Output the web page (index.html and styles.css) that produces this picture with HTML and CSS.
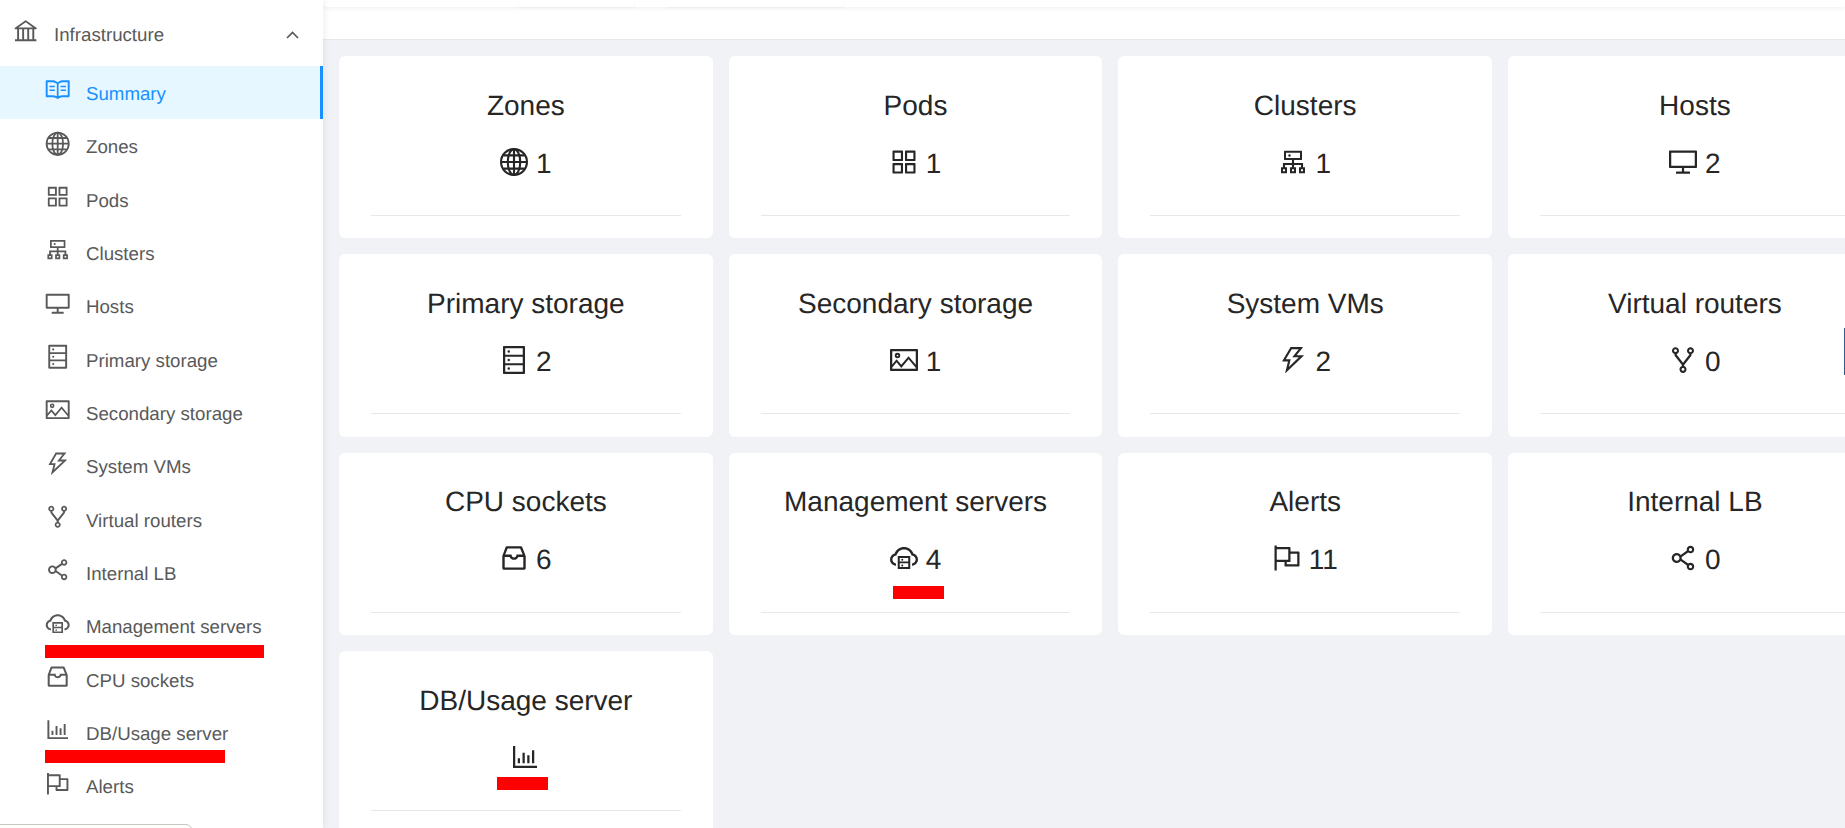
FILE: index.html
```html
<!DOCTYPE html>
<html lang="en">
<head>
<meta charset="utf-8">
<title>Infrastructure Summary</title>
<link rel="stylesheet" href="styles.css">
</head>
<body>
<svg class="sprite" xmlns="http://www.w3.org/2000/svg">
  <symbol id="i-bank" viewBox="0 0 1024 1024"><path d="M894 462c30.9 0 43.8-39.7 18.7-58L530.8 126.2a32.81 32.81 0 00-37.5 0L111.3 404c-25.1 18.2-12.2 58 18.8 58H192v374h-72c-4.4 0-8 3.6-8 8v56c0 4.4 3.6 8 8 8h784c4.4 0 8-3.6 8-8v-56c0-4.4-3.6-8-8-8h-72V462h62zM512 196.7l271.1 197.2H240.9L512 196.7zM264 462h117v374H264V462zm189 0h117v374H453V462zm307 374H642V462h118v374z"/></symbol>
  <symbol id="i-up" viewBox="0 0 13 8"><path d="M1 7L6.5 1.5 12 7" fill="none" stroke="currentColor" stroke-width="1.7"/></symbol>
  <symbol id="i-read" viewBox="0 0 1024 1024"><path d="M928 161H699.2c-49.1 0-97.1 14.1-138.4 40.7L512 233l-48.8-31.3A255.2 255.2 0 00324.8 161H96c-17.7 0-32 14.3-32 32v568c0 17.7 14.3 32 32 32h228.8c49.1 0 97.1 14.1 138.4 40.7l44.4 28.6c1.3.8 2.8 1.3 4.3 1.3s3-.4 4.3-1.3l44.4-28.6C602 807.1 650.1 793 699.2 793H928c17.7 0 32-14.3 32-32V193c0-17.7-14.3-32-32-32zM324.8 721H136V233h188.8c35.4 0 69.8 10.1 99.5 29.2l48.8 31.3 6.9 4.5v462c-47.6-25.6-100.8-39-155.2-39zm563.2 0H699.2c-54.4 0-107.6 13.4-155.2 39V298l6.9-4.5 48.8-31.3c29.7-19.1 64.1-29.2 99.5-29.2H888v488zM396.9 361H211.1c-3.9 0-7.1 3.4-7.1 7.5v45c0 4.1 3.2 7.5 7.1 7.5h185.7c3.9 0 7.1-3.4 7.1-7.5v-45c.1-4.1-3.1-7.5-7-7.5zm223.1 7.5v45c0 4.1 3.2 7.5 7.1 7.5h185.7c3.9 0 7.1-3.4 7.1-7.5v-45c0-4.1-3.2-7.5-7.1-7.5H627.1c-3.9 0-7.1 3.4-7.1 7.5zM396.9 501H211.1c-3.9 0-7.1 3.4-7.1 7.5v45c0 4.1 3.2 7.5 7.1 7.5h185.7c3.9 0 7.1-3.4 7.1-7.5v-45c.1-4.1-3.1-7.5-7-7.5zm416 0H627.1c-3.9 0-7.1 3.4-7.1 7.5v45c0 4.1 3.2 7.5 7.1 7.5h185.7c3.9 0 7.1-3.4 7.1-7.5v-45c.1-4.1-3.1-7.5-7-7.5z"/></symbol>
  <symbol id="i-global" viewBox="0 0 1024 1024"><g fill="none" stroke="currentColor" stroke-width="68"><circle cx="512" cy="512" r="414"/><ellipse cx="512" cy="512" rx="200" ry="414"/><path d="M512 98v828M98 512h828M170 300h684M170 724h684"/></g></symbol>
  <symbol id="i-appstore" viewBox="0 0 1024 1024"><path d="M864 144H560c-8.8 0-16 7.2-16 16v304c0 8.8 7.2 16 16 16h304c8.8 0 16-7.2 16-16V160c0-8.8-7.2-16-16-16zm-52 268H612V212h200v200zM464 544H160c-8.8 0-16 7.2-16 16v304c0 8.8 7.2 16 16 16h304c8.8 0 16-7.2 16-16V560c0-8.8-7.2-16-16-16zm-52 268H212V612h200v200zm452-268H560c-8.8 0-16 7.2-16 16v304c0 8.8 7.2 16 16 16h304c8.8 0 16-7.2 16-16V560c0-8.8-7.2-16-16-16zm-52 268H612V612h200v200zM464 144H160c-8.8 0-16 7.2-16 16v304c0 8.8 7.2 16 16 16h304c8.8 0 16-7.2 16-16V160c0-8.8-7.2-16-16-16zm-52 268H212V212h200v200z"/></symbol>
  <symbol id="i-cluster" viewBox="0 0 1024 1024"><path d="M888 680h-54V540H546v-92h238c8.8 0 16-7.2 16-16V168c0-8.8-7.2-16-16-16H240c-8.8 0-16 7.2-16 16v264c0 8.8 7.2 16 16 16h238v92H190v140h-54c-4.4 0-8 3.6-8 8v176c0 4.4 3.6 8 8 8h176c4.4 0 8-3.6 8-8V688c0-4.4-3.6-8-8-8h-54v-72h220v72h-54c-4.4 0-8 3.6-8 8v176c0 4.4 3.6 8 8 8h176c4.4 0 8-3.6 8-8V688c0-4.4-3.6-8-8-8h-54v-72h220v72h-54c-4.4 0-8 3.6-8 8v176c0 4.4 3.6 8 8 8h176c4.4 0 8-3.6 8-8V688c0-4.4-3.6-8-8-8zM256 805.3c0 1.5-1.2 2.7-2.7 2.7h-58.7c-1.5 0-2.7-1.2-2.7-2.7v-58.7c0-1.5 1.2-2.7 2.7-2.7h58.7c1.5 0 2.7 1.2 2.7 2.7v58.7zm288 0c0 1.5-1.2 2.7-2.7 2.7h-58.7c-1.5 0-2.7-1.2-2.7-2.7v-58.7c0-1.5 1.2-2.7 2.7-2.7h58.7c1.5 0 2.7 1.2 2.7 2.7v58.7zM288 384V216h448v168H288zm544 421.3c0 1.5-1.2 2.7-2.7 2.7h-58.7c-1.5 0-2.7-1.2-2.7-2.7v-58.7c0-1.5 1.2-2.7 2.7-2.7h58.7c1.5 0 2.7 1.2 2.7 2.7v58.7zM360 300a40 40 0 1080 0 40 40 0 10-80 0z"/></symbol>
  <symbol id="i-desktop" viewBox="0 0 1024 1024"><path d="M928 140H96c-17.7 0-32 14.3-32 32v496c0 17.7 14.3 32 32 32h380v112H304c-8.8 0-16 7.2-16 16v48c0 4.4 3.6 8 8 8h432c4.4 0 8-3.6 8-8v-48c0-8.8-7.2-16-16-16H548V700h380c17.7 0 32-14.3 32-32V172c0-17.7-14.3-32-32-32zm-40 488H136V212h752v416z"/></symbol>
  <symbol id="i-database" viewBox="0 0 1024 1024"><path d="M832 64H192c-17.7 0-32 14.3-32 32v832c0 17.7 14.3 32 32 32h640c17.7 0 32-14.3 32-32V96c0-17.7-14.3-32-32-32zm-600 72h560v208H232V136zm560 480H232V408h560v208zm0 272H232V680h560v208zM304 240a40 40 0 1080 0 40 40 0 10-80 0zm0 272a40 40 0 1080 0 40 40 0 10-80 0zm0 272a40 40 0 1080 0 40 40 0 10-80 0z"/></symbol>
  <symbol id="i-picture" viewBox="0 0 1024 1024"><path d="M928 160H96c-17.7 0-32 14.3-32 32v640c0 17.7 14.3 32 32 32h832c17.7 0 32-14.3 32-32V192c0-17.7-14.3-32-32-32zm-40 632H136v-39.9l138.5-164.3 150.1 178L658.1 489 888 761.6V792zm0-129.8L664.2 396.8c-3.2-3.8-9-3.8-12.2 0L424.6 666.4l-144-170.7c-3.2-3.8-9-3.8-12.2 0L136 652.7V232h752v430.2zM304 456a88 88 0 100-176 88 88 0 000 176zm0-116c15.5 0 28 12.5 28 28s-12.5 28-28 28-28-12.5-28-28 12.5-28 28-28z"/></symbol>
  <symbol id="i-thunder" viewBox="0 0 1024 1024"><path d="M848 359.3H627.7L825.8 109c4.1-5.3.4-13-6.3-13H436c-2.8 0-5.5 1.5-6.9 4L170 547.5c-3.1 5.3.7 12 6.9 12h174.4l-89.4 357.6c-1.9 7.8 7.5 13.3 13.3 7.7L853.5 373c5.2-4.9 1.7-13.7-5.5-13.7zM378.2 732.5l60.3-241H281.1l189.6-327.4h224.6L487 427.4h211L378.2 732.5z"/></symbol>
  <symbol id="i-fork" viewBox="0 0 1024 1024"><path d="M752 100c-61.8 0-112 50.2-112 112 0 47.7 29.9 88.5 72 104.6v27.6L512 601.4 312 344.2v-27.6c42.1-16.1 72-56.9 72-104.6 0-61.8-50.2-112-112-112s-112 50.2-112 112c0 50.6 33.8 93.5 80 107.3v34.4c0 9.7 3.3 19.3 9.3 27L476 672.3v33.6c-44.2 15-76 56.9-76 106.1 0 61.8 50.2 112 112 112s112-50.2 112-112c0-49.2-31.8-91-76-106.1v-33.6l226.7-291.6c6-7.7 9.3-17.3 9.3-27v-34.4c46.2-13.8 80-56.7 80-107.3 0-61.8-50.2-112-112-112zM224 212a48.01 48.01 0 0196 0 48.01 48.01 0 01-96 0zm336 600a48.01 48.01 0 01-96 0 48.01 48.01 0 0196 0zm192-552a48.01 48.01 0 010-96 48.01 48.01 0 010 96z"/></symbol>
  <symbol id="i-share" viewBox="0 0 1024 1024"><path d="M752 664c-28.5 0-54.8 10-75.4 26.7L469.4 540.8a160.68 160.68 0 000-57.6l207.2-149.9C697.2 350 723.5 360 752 360c66.2 0 120-53.8 120-120s-53.8-120-120-120-120 53.8-120 120c0 11.6 1.6 22.7 4.7 33.3L439.9 415.8C410.7 377.1 364.3 352 312 352c-88.4 0-160 71.6-160 160s71.6 160 160 160c52.3 0 98.7-25.1 127.9-63.8l196.8 142.5c-3.1 10.6-4.7 21.8-4.7 33.3 0 66.2 53.8 120 120 120s120-53.8 120-120-53.8-120-120-120zm0-476c28.7 0 52 23.3 52 52s-23.3 52-52 52-52-23.3-52-52 23.3-52 52-52zM312 600c-48.5 0-88-39.5-88-88s39.5-88 88-88 88 39.5 88 88-39.5 88-88 88zm440 236c-28.7 0-52-23.3-52-52s23.3-52 52-52 52 23.3 52 52-23.3 52-52 52z"/></symbol>
  <symbol id="i-cloud" viewBox="0 0 1024 1024"><path d="M704 446H320c-4.4 0-8 3.6-8 8v402c0 4.4 3.6 8 8 8h384c4.4 0 8-3.6 8-8V454c0-4.4-3.6-8-8-8zm-328 64h272v117H376V510zm272 290H376V683h272v117z"/><path d="M424 748a32 32 0 1064 0 32 32 0 10-64 0zm0-178a32 32 0 1064 0 32 32 0 10-64 0z"/><path d="M811.4 368.9C765.6 248 648.9 162 512.2 162S258.8 247.9 213 368.8C126.9 391.5 63.5 470.2 64 563.6 64.6 668 145.6 752.9 247.6 762c4.7.4 8.7-3.3 8.7-8v-60.4c0-4-3-7.4-7-7.9-27-3.4-52.5-15.2-72.1-34.5-24-23.5-37.2-55.1-37.2-88.6 0-28 9.1-54.4 26.2-76.4 16.7-21.4 40.2-36.9 66.1-43.7l37.9-10 13.9-36.7c8.6-22.8 20.6-44.2 35.7-63.5 14.9-19.2 32.6-36 52.4-50 41.1-28.9 89.5-44.2 140-44.2s98.9 15.3 140 44.3c19.9 14 37.5 30.8 52.4 50 15.1 19.3 27.1 40.7 35.7 63.5l13.8 36.6 37.8 10c54.2 14.4 92.1 63.7 92.1 120 0 33.6-13.2 65.1-37.2 88.6-19.5 19.2-44.9 31.1-71.9 34.5-4 .5-6.9 3.9-6.9 7.9V754c0 4.7 4.1 8.4 8.8 8 101.7-9.2 182.5-94 183.2-198.2.6-93.4-62.7-172.1-148.6-194.9z"/></symbol>
  <symbol id="i-inbox" viewBox="0 0 1024 1024"><path d="M885.2 446.3l-.2-.8-112.2-285.1c-5-16.1-19.9-27.2-36.8-27.2H281.2c-17 0-32.1 11.3-36.9 27.6L139.4 443l-.3.7-.2.8c-1.3 4.9-1.7 9.9-1 14.8-.1 1.6-.2 3.2-.2 4.8V830a60.9 60.9 0 0060.8 60.8h627.2c33.5 0 60.8-27.3 60.9-60.8V464.1c0-1.3 0-2.6-.1-3.7.4-4.9 0-9.6-1.3-14.1zm-295.8-43l-.3 15.7c-.8 44.9-31.8 75.1-77.1 75.1-22.1 0-41.1-7.1-54.8-20.6S436 441.2 435.6 419l-.3-15.7H229.5L309 210h399.2l81.7 193.3H589.4zm-375 76.8h157.3c24.3 57.1 76 90.8 140.4 90.8 33.7 0 65-9.4 90.3-27.2 22.2-15.6 39.5-37.4 50.7-63.6h156.5V814H214.4V480.1z"/></symbol>
  <symbol id="i-chart" viewBox="0 0 1024 1024"><path d="M888 792H200V168c0-4.4-3.6-8-8-8h-56c-4.4 0-8 3.6-8 8v688c0 4.4 3.6 8 8 8h752c4.4 0 8-3.6 8-8v-56c0-4.4-3.6-8-8-8zm-600-80h56c4.4 0 8-3.6 8-8V560c0-4.4-3.6-8-8-8h-56c-4.4 0-8 3.6-8 8v144c0 4.4 3.6 8 8 8zm152 0h56c4.4 0 8-3.6 8-8V384c0-4.4-3.6-8-8-8h-56c-4.4 0-8 3.6-8 8v320c0 4.4 3.6 8 8 8zm152 0h56c4.4 0 8-3.6 8-8V462c0-4.4-3.6-8-8-8h-56c-4.4 0-8 3.6-8 8v242c0 4.4 3.6 8 8 8zm152 0h56c4.4 0 8-3.6 8-8V304c0-4.4-3.6-8-8-8h-56c-4.4 0-8 3.6-8 8v400c0 4.4 3.6 8 8 8z"/></symbol>
  <symbol id="i-flag" viewBox="0 0 1024 1024"><path d="M880 305H624V192c0-17.7-14.3-32-32-32H184v-40c0-4.4-3.6-8-8-8h-56c-4.4 0-8 3.6-8 8v784c0 4.4 3.6 8 8 8h56c4.4 0 8-3.6 8-8V640h248v113c0 17.7 14.3 32 32 32h416c17.7 0 32-14.3 32-32V337c0-17.7-14.3-32-32-32zM184 568V232h368v336H184zm656 145H504v-73h112c4.4 0 8-3.6 8-8V377h216v336z"/></symbol>
</svg>

<div class="app">
  <aside class="sidebar">
    <div class="group-head">
      <svg class="icon"><use href="#i-bank"/></svg>
      <span class="group-label">Infrastructure</span>
      <svg class="chevron"><use href="#i-up"/></svg>
    </div>
    <nav class="menu">
      <a class="item active"><svg class="icon"><use href="#i-read"/></svg><span>Summary</span></a>
      <a class="item"><svg class="icon"><use href="#i-global"/></svg><span>Zones</span></a>
      <a class="item"><svg class="icon"><use href="#i-appstore"/></svg><span>Pods</span></a>
      <a class="item"><svg class="icon"><use href="#i-cluster"/></svg><span>Clusters</span></a>
      <a class="item"><svg class="icon"><use href="#i-desktop"/></svg><span>Hosts</span></a>
      <a class="item"><svg class="icon"><use href="#i-database"/></svg><span>Primary storage</span></a>
      <a class="item"><svg class="icon"><use href="#i-picture"/></svg><span>Secondary storage</span></a>
      <a class="item"><svg class="icon"><use href="#i-thunder"/></svg><span>System VMs</span></a>
      <a class="item"><svg class="icon"><use href="#i-fork"/></svg><span>Virtual routers</span></a>
      <a class="item"><svg class="icon"><use href="#i-share"/></svg><span>Internal LB</span></a>
      <a class="item"><svg class="icon"><use href="#i-cloud"/></svg><span>Management servers</span><i class="redact redact-mgmt"></i></a>
      <a class="item"><svg class="icon"><use href="#i-inbox"/></svg><span>CPU sockets</span></a>
      <a class="item"><svg class="icon"><use href="#i-chart"/></svg><span>DB/Usage server</span><i class="redact redact-db"></i></a>
      <a class="item"><svg class="icon"><use href="#i-flag"/></svg><span>Alerts</span></a>
    </nav>
    <div class="peek"></div>
  </aside>

  <main class="main">
    <div class="topstrip"><b class="tab tab-a"></b><b class="tab tab-b"></b></div>
    <div class="subbar"></div>
    <section class="grid">
      <article class="card"><h3>Zones</h3><div class="count"><svg class="icon"><use href="#i-global"/></svg><span>1</span></div><hr></article>
      <article class="card"><h3>Pods</h3><div class="count"><svg class="icon"><use href="#i-appstore"/></svg><span>1</span></div><hr></article>
      <article class="card"><h3>Clusters</h3><div class="count"><svg class="icon"><use href="#i-cluster"/></svg><span>1</span></div><hr></article>
      <article class="card"><h3>Hosts</h3><div class="count"><svg class="icon"><use href="#i-desktop"/></svg><span>2</span></div><hr></article>
      <article class="card"><h3>Primary storage</h3><div class="count"><svg class="icon"><use href="#i-database"/></svg><span>2</span></div><hr></article>
      <article class="card"><h3>Secondary storage</h3><div class="count"><svg class="icon"><use href="#i-picture"/></svg><span>1</span></div><hr></article>
      <article class="card"><h3>System VMs</h3><div class="count"><svg class="icon"><use href="#i-thunder"/></svg><span>2</span></div><hr></article>
      <article class="card"><h3>Virtual routers</h3><div class="count"><svg class="icon"><use href="#i-fork"/></svg><span>0</span></div><hr></article>
      <article class="card"><h3>CPU sockets</h3><div class="count"><svg class="icon"><use href="#i-inbox"/></svg><span>6</span></div><hr></article>
      <article class="card"><h3>Management servers</h3><div class="count"><svg class="icon"><use href="#i-cloud"/></svg><span>4</span><i class="redact redact-card-mgmt"></i></div><hr></article>
      <article class="card"><h3>Alerts</h3><div class="count"><svg class="icon"><use href="#i-flag"/></svg><span>11</span></div><hr></article>
      <article class="card"><h3>Internal LB</h3><div class="count"><svg class="icon"><use href="#i-share"/></svg><span>0</span></div><hr></article>
      <article class="card"><h3>DB/Usage server</h3><div class="count"><svg class="icon"><use href="#i-chart"/></svg><i class="redact redact-card-db"></i></div><hr></article>
    </section>
    <div class="scroll-mark"></div>
  </main>
</div>
</body>
</html>
```

FILE: styles.css
```css
* { box-sizing: border-box; }

html, body {
  margin: 0;
  height: 100%;
  overflow: hidden;
  background: #f0f2f5;
  font-family: "Liberation Sans", Arial, sans-serif;
  text-rendering: geometricPrecision;
}

.sprite { display: none; }

.icon { fill: currentColor; flex: none; }

.app {
  display: flex;
  height: 828px;
  overflow: hidden;
}

/* Sidebar */
.sidebar {
  position: relative;
  flex: 0 0 323px;
  background: #fff;
  color: #595959;
  font-size: 18.7px;
  box-shadow: 2px 0 6px rgba(0, 21, 41, 0.06);
  overflow: hidden;
  z-index: 2;
}

.sidebar .icon {
  width: 27.4px;
  height: 27.4px;
  margin-top: -5px;
}

.sidebar span { padding-top: 3px; }

.group-head {
  display: flex;
  align-items: center;
  height: 66px;
  padding: 0 24px 0 12.3px;
  gap: 14.3px;
}

.group-label { flex: 1; }

.chevron {
  width: 13px;
  height: 8px;
  color: #595959;
  margin-top: 3px;
}

.menu {
  display: grid;
  grid-auto-rows: 53.33px;
}

.item {
  position: relative;
  display: flex;
  align-items: center;
  gap: 14.3px;
  padding-left: 44.3px;
}

.item.active {
  background: #e6f7ff;
  color: #1890ff;
  border-right: 3px solid #1890ff;
}

.redact {
  position: absolute;
  display: block;
  height: 13px;
  background: #fe0000;
}

.redact-mgmt { left: 45px; width: 219px; top: 46px; }
.redact-db { left: 45px; width: 180px; top: 44px; }

.peek {
  position: absolute;
  left: -12px;
  top: 824px;
  width: 204px;
  height: 40px;
  background: #fff;
  border: 1px solid #c9c6c0;
  border-radius: 6px;
}

/* Main */
.main {
  position: relative;
  flex: 1;
  min-width: 0;
  display: flex;
  flex-direction: column;
}

.topstrip {
  flex: 0 0 7px;
  display: flex;
  gap: 33px;
  padding-left: 196px;
  background: #fff;
  box-shadow: 0 1px 5px rgba(0, 21, 41, 0.07);
  position: relative;
  z-index: 1;
}

.tab {
  display: block;
  box-shadow: 0 1px 3px rgba(0, 0, 0, 0.05);
}

.tab-a { width: 115px; }
.tab-b { width: 176px; }

.subbar {
  flex: 0 0 33px;
  background: #fff;
  border-bottom: 1px solid #e8e8e8;
}

.grid {
  display: grid;
  grid-template-columns: repeat(4, 373.7px);
  grid-auto-rows: 182.4px;
  gap: 16px;
  padding: 16px 0 0 16px;
}

.card {
  display: flex;
  flex-direction: column;
  align-items: center;
  background: #fff;
  border-radius: 6px;
  padding: 28.5px 32px 0;
  color: #262626;
}

.card h3 {
  margin: 0;
  font-size: 28px;
  line-height: 42px;
  font-weight: 400;
}

.count {
  position: relative;
  display: flex;
  align-items: center;
  justify-content: center;
  gap: 6px;
  margin-top: 16px;
  padding-right: 2px;
  height: 42px;
  font-size: 28px;
}

.count .icon {
  width: 32px;
  height: 32px;
  margin-top: -4px;
}

.card hr {
  width: 100%;
  margin: 30.5px 0 0;
  border: 0;
  border-top: 1px solid #e8e8e8;
}

.redact-card-mgmt {
  left: 50%;
  margin-left: -23px;
  width: 51px;
  top: 47px;
}

.redact-card-db {
  left: 50%;
  margin-left: -29px;
  width: 51px;
  top: 39px;
}

.scroll-mark {
  position: absolute;
  right: 0;
  top: 328px;
  width: 1px;
  height: 47px;
  background: #2f5f8f;
}
```
